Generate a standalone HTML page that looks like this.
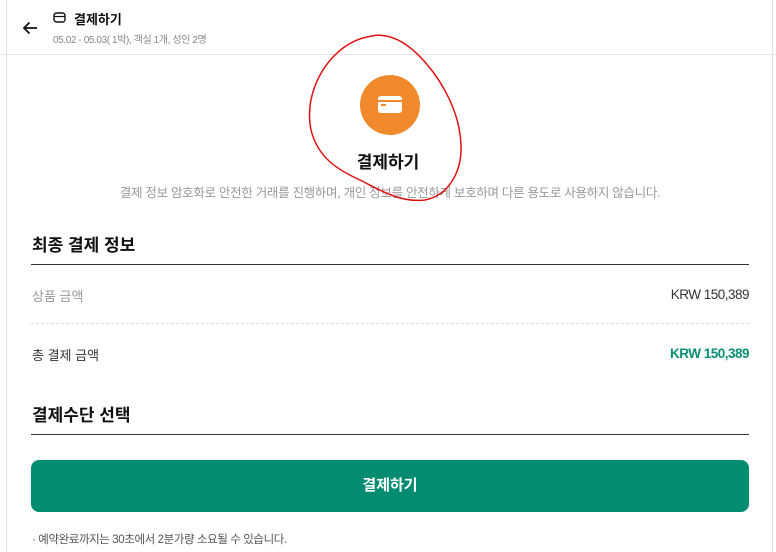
<!DOCTYPE html>
<html><head><meta charset="utf-8"><style>
*{margin:0;padding:0;box-sizing:border-box}
body{width:776px;height:552px;overflow:hidden;background:#fff;font-family:"Liberation Sans","Noto Sans CJK KR",sans-serif;color:#111;position:relative}
.abs{position:absolute}
.frame{position:absolute;left:6px;right:3px;top:0;bottom:0;border-left:1px solid #e2e2e2;border-right:1px solid #e2e2e2}
</style></head><body>
<div class="frame"></div>
<div class="abs" style="left:0;top:54px;width:776px;border-top:1px solid #e6e6e6"></div>
<svg class="abs" style="left:21px;top:19px" width="18" height="18" viewBox="0 0 18 18"><path d="M16 9H3M8.5 3.5L3 9l5.5 5.5" fill="none" stroke="#111" stroke-width="1.8"/></svg>
<svg class="abs" style="left:53px;top:12px" width="13" height="11" viewBox="0 0 13 11"><rect x="1" y="1" width="11" height="9" rx="2.5" fill="none" stroke="#111" stroke-width="1.4"/><path d="M1 4.5h11" stroke="#111" stroke-width="1.2"/></svg>
<div class="abs" style="left:74px;top:9px;font-size:13px;font-weight:bold">결제하기</div>
<div class="abs" style="left:53px;top:31px;font-size:10px;color:#888;letter-spacing:-0.4px">05.02 - 05.03( 1박), 객실 1개, 성인 2명</div>

<div class="abs" style="left:360px;top:75px;width:60px;height:60px;border-radius:50%;background:#f08a2c"></div>
<div class="abs" style="left:378px;top:96px;width:24px;height:17px;border-radius:3px;background:#fff"></div>
<div class="abs" style="left:378px;top:100px;width:24px;height:2px;background:#f08a2c"></div>
<div class="abs" style="left:381px;top:104px;width:5px;height:1.5px;background:#f08a2c"></div>
<div class="abs" style="left:0;width:776px;top:148px;text-align:center;font-size:17px;font-weight:bold">결제하기</div>
<div class="abs" style="left:0;width:780px;top:182px;text-align:center;font-size:12.5px;color:#999;letter-spacing:-0.3px">결제 정보 암호화로 안전한 거래를 진행하며, 개인 정보를 안전하게 보호하며 다른 용도로 사용하지 않습니다.</div>
<svg class="abs" style="left:0;top:0" width="776" height="552"><path d="M372 36C392 32 410 45 425 62C445 85 460 115 461 145C462 170 450 195 425 200C400 203 380 190 360 180C338 170 318 158 311 130C305 100 318 72 335 55C345 45 358 38 372 36Z" fill="none" stroke="#e01010" stroke-width="1.5"/></svg>

<div class="abs" style="left:32px;top:231px;font-size:17px;font-weight:bold">최종 결제 정보</div>
<div class="abs" style="left:31px;top:264px;width:718px;border-top:1px solid #333"></div>
<div class="abs" style="left:32px;top:286px;font-size:13px;color:#999">상품 금액</div>
<div class="abs" style="right:27px;top:287px;font-size:13.5px;color:#333;letter-spacing:-0.5px">KRW 150,389</div>
<div class="abs" style="left:31px;top:323px;width:718px;border-top:1px dashed #ddd"></div>
<div class="abs" style="left:32px;top:345px;font-size:13px;color:#333">총 결제 금액</div>
<div class="abs" style="right:27px;top:346px;font-size:13.5px;font-weight:bold;color:#0a8f72;letter-spacing:-0.5px">KRW 150,389</div>
<div class="abs" style="left:32px;top:401px;font-size:17px;font-weight:bold">결제수단 선택</div>
<div class="abs" style="left:31px;top:434px;width:718px;border-top:1px solid #333"></div>
<div class="abs" style="left:31px;top:460px;width:718px;height:52px;border-radius:8px;background:#038c6f;color:#fff;font-size:15px;font-weight:bold;text-align:center;line-height:52px">결제하기</div>
<div class="abs" style="left:32px;top:531px;font-size:11.5px;color:#555;letter-spacing:-0.4px">· 예약완료까지는 30초에서 2분가량 소요될 수 있습니다.</div>
</body></html>
